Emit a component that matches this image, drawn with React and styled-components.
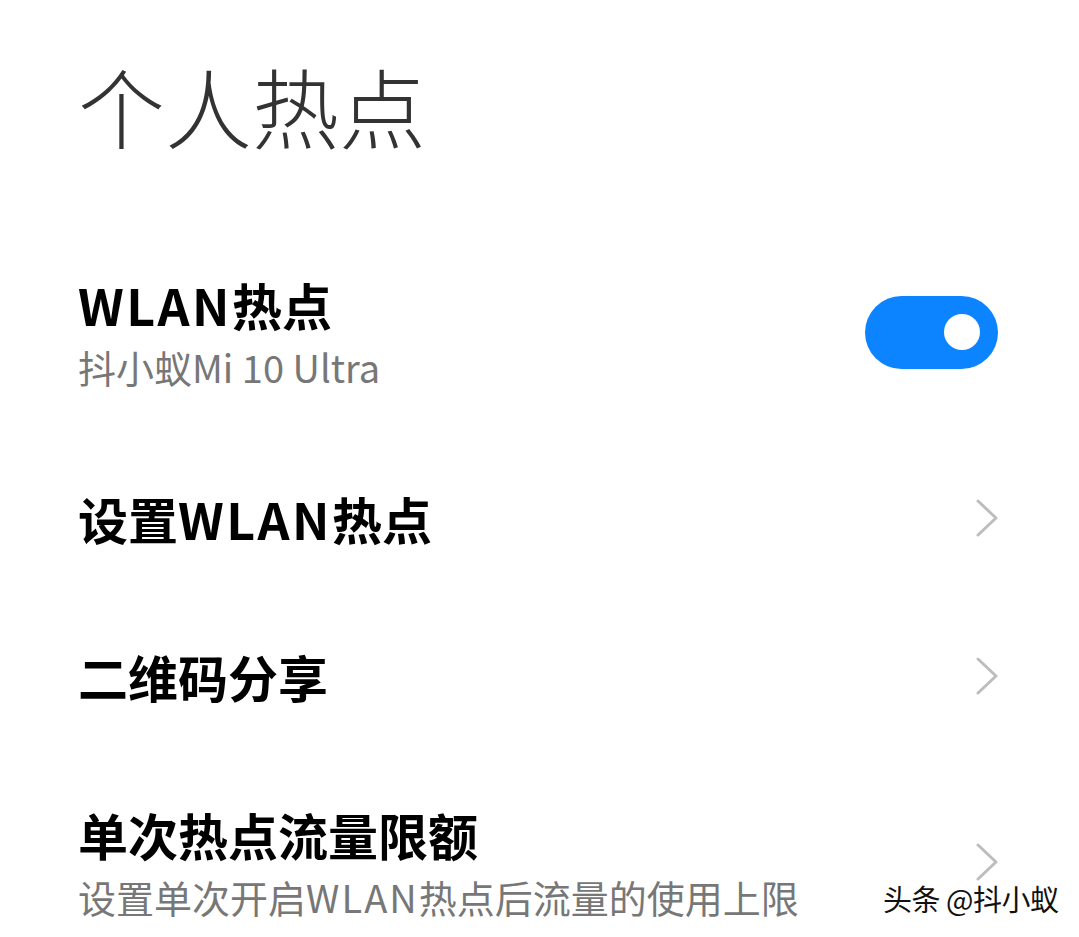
import React from "react";
import styled, { createGlobalStyle } from "styled-components";

const Global = createGlobalStyle`
  html, body { margin: 0; padding: 0; background: #fff; }
  body { font-family: "Noto Sans CJK SC", "Noto Sans", sans-serif; }
`;

const Page = styled.div`
  position: relative;
  width: 1079px;
  height: 937px;
  overflow: hidden;
  background: #fff;
  box-sizing: border-box;
  padding: 0 81px 0 78px;
`;

const Header = styled.h1`
  margin: 0;
  padding-top: 53px;
  font-size: 87px;
  line-height: 104px;
  font-weight: 300;
  color: #333;
  letter-spacing: 0;
`;

const List = styled.div`
  display: flex;
  flex-direction: column;
  margin-top: 68px;
`;

const Row = styled.div`
  display: flex;
  align-items: center;
  justify-content: space-between;
  padding: 47px 0;
`;

const Texts = styled.div`
  display: flex;
  flex-direction: column;
`;

const Title = styled.div`
  font-size: 50px;
  line-height: 64px;
  font-weight: 700;
  color: #000;
`;

const Sub = styled.div`
  margin-top: 6px;
  font-size: 38px;
  line-height: 50px;
  font-weight: 400;
  color: #777;
`;

const Latin = styled.span`
  letter-spacing: ${(p) => p.$spacing || "0px"};
`;

const Toggle = styled.div`
  width: 133px;
  height: 73px;
  border-radius: 37px;
  background: ${(p) => (p.$on ? "#0d84ff" : "#ddd")};
  display: flex;
  align-items: center;
  justify-content: ${(p) => (p.$on ? "flex-end" : "flex-start")};
  padding: 0 18px;
  box-sizing: border-box;
  flex-shrink: 0;
`;

const Knob = styled.div`
  width: 36px;
  height: 36px;
  border-radius: 50%;
  background: #fff;
`;

const Chevron = styled.svg`
  width: 24px;
  height: 38px;
  flex-shrink: 0;
  margin-right: -1px;
`;

const Watermark = styled.div`
  position: absolute;
  left: 883px;
  top: 879px;
  font-size: 29px;
  line-height: 38px;
  color: #111;
  letter-spacing: -0.5px;
  text-shadow: 1px 1px 0 #fff, -1px -1px 0 #fff, 1px -1px 0 #fff, -1px 1px 0 #fff;
`;

const Arrow = () => (
  <Chevron viewBox="0 0 24 38">
    <path d="M3 2 L21 19 L3 36" fill="none" stroke="#bdbdbd" strokeWidth="3" strokeLinecap="round" strokeLinejoin="round" />
  </Chevron>
);

export default function App() {
  return (
    <Page>
      <Global />
      <Header>个人热点</Header>
      <List>
        <Row>
          <Texts>
            <Title><Latin $spacing="2.5px">WLAN</Latin>热点</Title>
            <Sub>抖小蚁Mi 10 Ultra</Sub>
          </Texts>
          <Toggle $on>
            <Knob />
          </Toggle>
        </Row>
        <Row>
          <Texts>
            <Title>设置<Latin $spacing="2.5px">WLAN</Latin>热点</Title>
          </Texts>
          <Arrow />
        </Row>
        <Row>
          <Texts>
            <Title>二维码分享</Title>
          </Texts>
          <Arrow />
        </Row>
        <Row>
          <Texts>
            <Title>单次热点流量限额</Title>
            <Sub>设置单次开启<Latin $spacing="2px">WLAN</Latin>热点后流量的使用上限</Sub>
          </Texts>
          <Arrow />
        </Row>
      </List>
      <Watermark>头条 @抖小蚁</Watermark>
    </Page>
  );
}
